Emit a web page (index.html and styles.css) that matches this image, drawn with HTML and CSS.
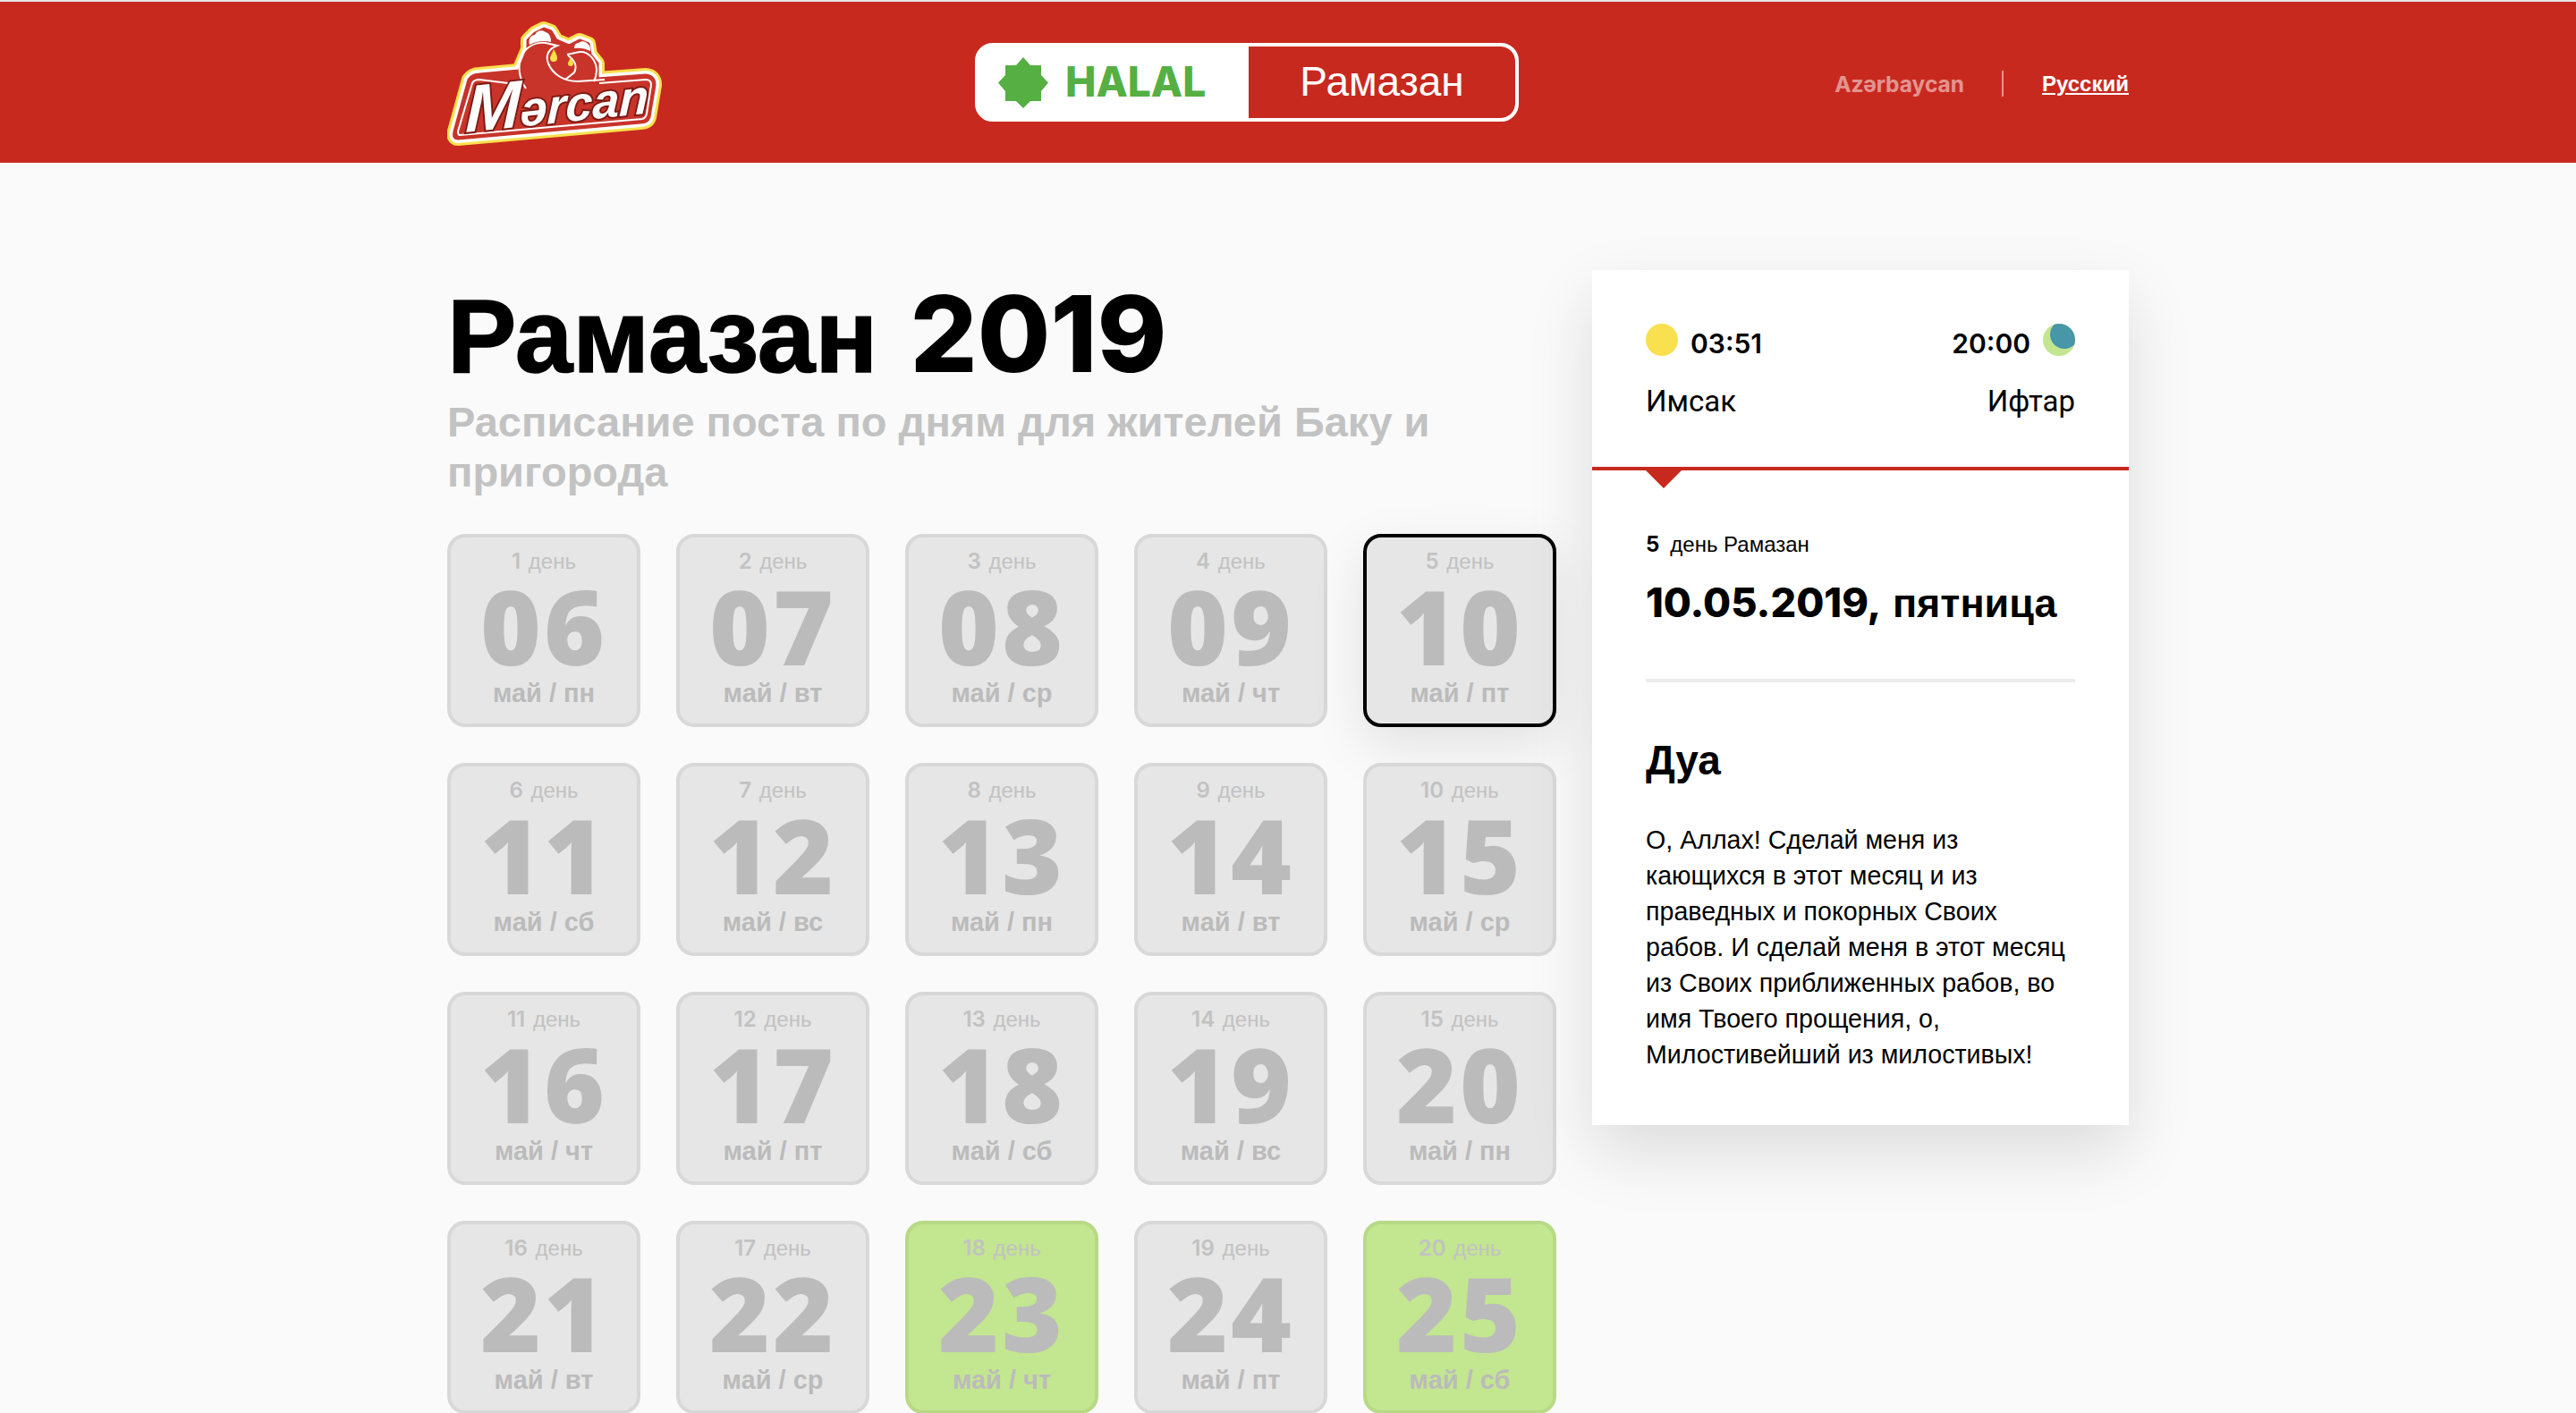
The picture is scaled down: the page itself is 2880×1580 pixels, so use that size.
FILE: index.html
```html
<!DOCTYPE html>
<html lang="ru">
<head>
    <meta charset="UTF-8">
    <title>Рамазан 2019</title>
    <link rel="stylesheet" href="styles.css">
</head>
<body>
<header class="header">
    <div class="wrap header-row">
        <a class="logo" href="#">
            <svg width="240" height="142" viewBox="0 0 240 142">
                <!-- same outline drawn three times, thick to thin -->
                <path class="logo-yellow" d="M8 124L24 66Q28 60 36 60L80 56L90 32V22L98 14L108 9L116 12L122 22L136 28L148 22L158 26L160 38L168 48V65L222 61Q232 62 232 72L226 108Q224 114 216 114L12 132Q6 132 8 124Z"/>
                <path class="logo-white" d="M8 124L24 66Q28 60 36 60L80 56L90 32V22L98 14L108 9L116 12L122 22L136 28L148 22L158 26L160 38L168 48V65L222 61Q232 62 232 72L226 108Q224 114 216 114L12 132Q6 132 8 124Z"/>
                <path class="logo-red" d="M8 124L24 66Q28 60 36 60L80 56L90 32V22L98 14L108 9L116 12L122 22L136 28L148 22L158 26L160 38L168 48V65L222 61Q232 62 232 72L226 108Q224 114 216 114L12 132Q6 132 8 124Z"/>
                <path class="logo-line" d="M14 128L218 110Q222 109 223 104L228 72Q228 66 222 66L170 70M84 72L36 66Q30 66 28 70L12 124Q12 128 14 128"/>
                <path class="logo-line" d="M88 76C80 64 78 50 84 38C90 28 100 24 110 25L123 28C112 32 110 40 113 48C118 60 130 68 146 68L176 66"/>
                <path class="logo-line" d="M134 38L148 35C158 34 166 44 167 54C167 60 166 64 164 68M135 39C142 44 146 50 142 58L132 66"/>
                <path class="logo-comb" d="M92 27C90 20 94 16 98 16C100 11 106 10 110 13C114 14 116 18 116 24C108 22 100 23 92 27Z"/>
                <path class="logo-comb" d="M142 31C142 27 144 25 147 25C150 22 155 23 157 26C160 28 160 31 160 34C154 31 148 30 142 31Z"/>
                <path class="logo-drop" d="M119 32C122 37 123 40 123 42A4 4 0 0 1 115 42C115 40 117 37 119 32Z"/>
                <path class="logo-drop" d="M138 41C140 45 141 47 141 48A3 3 0 0 1 135 48C135 47 136 45 138 41Z"/>
                <text class="logo-text" transform="translate(20 125) rotate(-6) skewX(-8)"><tspan class="logo-m">M</tspan>ərcan</text>
            </svg>
        </a>
        <div class="switch">
            <a class="switch-halal" href="#">
                <svg class="star" width="56" height="57" viewBox="0 0 56 57">
                    <path d="M28 0l8 9h12v11l8 8.500-8 9.500v11H36l-8 8-8-8H8V38l-8-9.500 8-8.500V9h12z"/>
                </svg>
                <span>HALAL</span>
            </a>
            <a class="switch-ramazan" href="#">Рамазан</a>
        </div>
        <nav class="langs">
            <a class="lang" href="#">Azərbaycan</a>
            <span class="lang-sep"></span>
            <a class="lang lang-active" href="#">Русский</a>
        </nav>
    </div>
</header>

<main class="wrap page">
    <section class="left">
        <h1>Рамазан <span class="digits">2019</span></h1>
        <p class="subtitle">Расписание поста по дням для жителей Баку и пригорода</p>
        <div class="days">
            <a class="day"><small><b>1</b> день</small><strong>06</strong><em>май / пн</em></a>
            <a class="day"><small><b>2</b> день</small><strong>07</strong><em>май / вт</em></a>
            <a class="day"><small><b>3</b> день</small><strong>08</strong><em>май / ср</em></a>
            <a class="day"><small><b>4</b> день</small><strong>09</strong><em>май / чт</em></a>
            <a class="day day-current"><small><b>5</b> день</small><strong>10</strong><em>май / пт</em></a>
            <a class="day"><small><b>6</b> день</small><strong>11</strong><em>май / сб</em></a>
            <a class="day"><small><b>7</b> день</small><strong>12</strong><em>май / вс</em></a>
            <a class="day"><small><b>8</b> день</small><strong>13</strong><em>май / пн</em></a>
            <a class="day"><small><b>9</b> день</small><strong>14</strong><em>май / вт</em></a>
            <a class="day"><small><b>10</b> день</small><strong>15</strong><em>май / ср</em></a>
            <a class="day"><small><b>11</b> день</small><strong>16</strong><em>май / чт</em></a>
            <a class="day"><small><b>12</b> день</small><strong>17</strong><em>май / пт</em></a>
            <a class="day"><small><b>13</b> день</small><strong>18</strong><em>май / сб</em></a>
            <a class="day"><small><b>14</b> день</small><strong>19</strong><em>май / вс</em></a>
            <a class="day"><small><b>15</b> день</small><strong>20</strong><em>май / пн</em></a>
            <a class="day"><small><b>16</b> день</small><strong>21</strong><em>май / вт</em></a>
            <a class="day"><small><b>17</b> день</small><strong>22</strong><em>май / ср</em></a>
            <a class="day day-green"><small><b>18</b> день</small><strong>23</strong><em>май / чт</em></a>
            <a class="day"><small><b>19</b> день</small><strong>24</strong><em>май / пт</em></a>
            <a class="day day-green"><small><b>20</b> день</small><strong>25</strong><em>май / сб</em></a>
        </div>
    </section>

    <aside class="panel">
        <div class="times">
            <div class="time">
                <div class="time-top"><span class="sun"></span><b>03:51</b></div>
                <div class="time-name">Имсак</div>
            </div>
            <div class="time time-right">
                <div class="time-top"><b>20:00</b><span class="moon"></span></div>
                <div class="time-name">Ифтар</div>
            </div>
        </div>
        <div class="panel-body">
            <div class="day-label"><b>5</b>день Рамазан</div>
            <div class="date"><span class="digits">10.05.2019,</span> пятница</div>
            <h2>Дуа</h2>
            <p class="dua">О, Аллах! Сделай меня из кающихся в этот месяц и из праведных и покорных Своих рабов. И сделай меня в этот месяц из Своих приближенных рабов, во имя Твоего прощения, о, Милостивейший из милостивых!</p>
        </div>
    </aside>
</main>
</body>
</html>
```

FILE: styles.css
```css
* {
    box-sizing: border-box;
}
body {
    margin: 0;
    height: 1580px;
    overflow: hidden;
    background-color: #fafafa;
    font-family: "Liberation Sans", Arial, sans-serif;
    color: #000;
}
a {
    text-decoration: none;
    color: inherit;
}
.wrap {
    width: 1880px;
    margin: 0 auto;
}

/* header */
.header {
    height: 182px;
    background-color: #c8291f;
    border-top: 2px solid #e4e4e4;
}
.header-row {
    display: flex;
    align-items: center;
    height: 100%;
}
.logo {
    display: block;
    width: 590px;
    height: 142px;
    margin-top: 4px;
}
.logo-yellow,
.logo-white,
.logo-red {
    stroke-linejoin: round;
}
.logo-yellow {
    fill: #f9e04c;
    stroke: #f9e04c;
    stroke-width: 16px;
}
.logo-white {
    fill: #fff;
    stroke: #fff;
    stroke-width: 10px;
}
.logo-red {
    fill: #c8342a;
    stroke: #c8342a;
    stroke-width: 3px;
}
.logo-line {
    fill: none;
    stroke: #fff;
    stroke-width: 2px;
}
.logo-comb {
    fill: #fff;
}
.logo-drop {
    fill: #f9e04c;
}
.logo-text {
    font-family: "Liberation Sans", sans-serif;
    font-weight: 700;
    font-style: italic;
    font-size: 54px;
    fill: #fff;
    stroke: #7d1b15;
    stroke-width: 4px;
    paint-order: stroke;
}
.logo-m {
    font-size: 74px;
}
.switch {
    display: flex;
    width: 608px;
    height: 88px;
    background: #fff;
    border: 4px solid #fff;
    border-radius: 20px;
    overflow: hidden;
}
.switch-halal {
    display: flex;
    align-items: center;
    gap: 19px;
    width: 302px;
    padding-left: 22px;
    font-family: Inter, "Liberation Sans", sans-serif;
    font-weight: 800;
    font-size: 46px;
    color: #55af43;
}
.switch-halal span {
    padding-bottom: 2px;
}
.star {
    fill: #55af43;
}
.switch-ramazan {
    flex: 1;
    display: flex;
    align-items: center;
    justify-content: center;
    padding-bottom: 2px;
    background-color: #c8291f;
    color: #fff;
    font-size: 46px;
    border-radius: 0 16px 16px 0;
}
.langs {
    display: flex;
    align-items: center;
    margin-left: auto;
    margin-top: 3px;
    font-weight: 700;
    font-size: 24px;
    color: #fff;
}
.lang {
    font-family: Inter, "Liberation Sans", sans-serif;
    font-size: 24.500px;
    opacity: 0.5;
}
.lang-active {
    font-family: "Liberation Sans", Arial, sans-serif;
    font-size: 24px;
    opacity: 1;
    text-decoration: underline;
}
.lang-sep {
    width: 2px;
    height: 29px;
    margin: 0 43px 0 42px;
    background: rgba(255,255,255,0.5);
}

/* left column */
.page {
    display: flex;
    align-items: flex-start;
    justify-content: space-between;
}
.left {
    width: 1240px;
    padding-top: 125px;
}
h1 {
    margin: 0;
    font-size: 116px;
    line-height: 132px;
    font-weight: 700;
    -webkit-text-stroke: 1.500px #000;
}
.digits {
    font-family: Inter, "Liberation Sans", sans-serif;
    font-weight: 800;
}
h1 .digits {
    margin-left: 4px;
    font-size: 118px;
    -webkit-text-stroke: 0;
}
.subtitle {
    margin: 2px 0 0;
    font-size: 47px;
    line-height: 56px;
    font-weight: 700;
    color: #c2c2c2;
}
.days {
    display: grid;
    grid-template-columns: repeat(5, 216px);
    grid-auto-rows: 216px;
    gap: 40px;
    margin-top: 41px;
}
.day {
    display: flex;
    flex-direction: column;
    align-items: center;
    padding-top: 12px;
    background-color: #e6e6e6;
    border: 4px solid #d8d8d8;
    border-radius: 20px;
    color: #bbb;
}
.day small {
    font-size: 24px;
    line-height: 30px;
    color: #c2c2c2;
}
.day b {
    margin-right: 2px;
    font-family: Inter, "Liberation Sans", sans-serif;
    font-weight: 600;
}
.day strong {
    font-family: "Open Sans", "Liberation Sans", sans-serif;
    font-weight: 800;
    font-size: 116px;
    line-height: 112px;
    letter-spacing: 3px;
    margin-bottom: 2px;
}
.day em {
    font-style: normal;
    font-weight: 700;
    font-size: 29px;
    line-height: 36px;
}
.day-current {
    border-color: #000;
    box-shadow: 0 20px 60px rgba(0,0,0,0.1);
}
.day-green {
    background-color: #c3e690;
    border-color: #b8d985;
}

/* right panel */
.panel {
    width: 600px;
    height: 956px;
    margin-top: 120px;
    background: #fff;
    box-shadow: 0 30px 70px rgba(0,0,0,0.12);
}
.times {
    position: relative;
    display: flex;
    justify-content: space-between;
    height: 224px;
    padding: 60px 60px 0;
    border-bottom: 4px solid #c8291f;
}
.times::after {
    content: "";
    position: absolute;
    left: 60px;
    bottom: -24px;
    border-top: 20px solid #c8291f;
    border-left: 20px solid transparent;
    border-right: 20px solid transparent;
}
.time-top {
    display: flex;
    align-items: flex-start;
    gap: 14px;
    height: 44px;
}
.time-top b {
    font-family: Inter, "Liberation Sans", sans-serif;
    font-weight: 600;
    font-size: 30px;
    line-height: 44px;
}
.sun,
.moon {
    display: block;
    width: 36px;
    height: 36px;
    border-radius: 50%;
    background-color: #f8e04f;
}
.moon {
    position: relative;
    overflow: hidden;
    background-color: #c3e690;
}
.moon::after {
    content: "";
    position: absolute;
    top: -4px;
    left: 8px;
    width: 32px;
    height: 32px;
    border-radius: 50%;
    background-color: #4797a9;
}
.time-name {
    margin-top: 23px;
    font-family: Roboto, sans-serif;
    font-size: 33px;
    line-height: 40px;
}
.time-right {
    text-align: right;
}
.time-right .time-top {
    justify-content: flex-end;
}
.panel-body {
    padding: 68px 60px 0;
}
.day-label {
    font-size: 24px;
    line-height: 30px;
}
.day-label b {
    margin-right: 12px;
    font-family: Inter, sans-serif;
    font-weight: 700;
}
.date {
    margin-top: 21px;
    padding-bottom: 55px;
    border-bottom: 4px solid #ececec;
    font-size: 45px;
    line-height: 58px;
    font-weight: 700;
}
h2 {
    margin: 57px 0 0;
    font-size: 46px;
    line-height: 60px;
    font-weight: 700;
}
.dua {
    margin: 39px 0 0;
    font-size: 28.600px;
    line-height: 40px;
}
```
